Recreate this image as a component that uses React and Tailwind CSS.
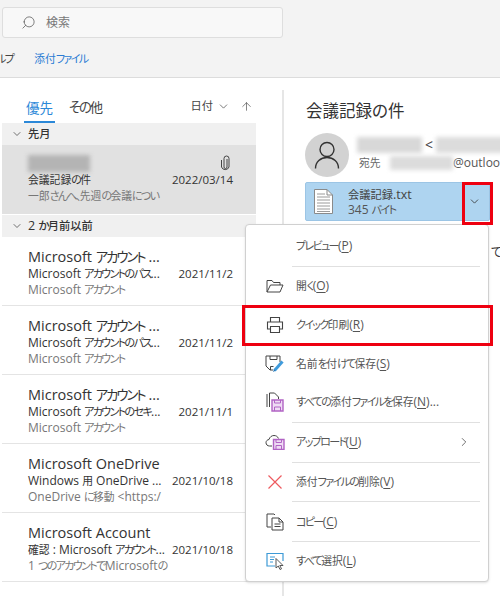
import React from 'react';
import { Search, ChevronDown, ChevronRight, ArrowUp } from 'lucide-react';

const font = "font-['Open_Sans','Noto_Sans_CJK_JP',sans-serif] [font-feature-settings:'palt']";

const mails = [
  { from: 'Microsoft アカウント ...', subject: 'Microsoft アカウントのパス...', date: '2021/11/2', preview: 'Microsoft アカウント' },
  { from: 'Microsoft アカウント ...', subject: 'Microsoft アカウントのパス...', date: '2021/11/2', preview: 'Microsoft アカウント' },
  { from: 'Microsoft アカウント ...', subject: 'Microsoft アカウントのセキ...', date: '2021/11/1', preview: 'Microsoft アカウント' },
  { from: 'Microsoft OneDrive', subject: 'Windows 用 OneDrive ...', date: '2021/10/18', preview: 'OneDrive に移動 <https:/' },
  { from: 'Microsoft Account', subject: '確認 : Microsoft アカウント...', date: '2021/10/18', preview: '1 つのアカウントでMicrosoftの' },
];

// kana sit tighter than kanji in the screenshot's UI font, latin stays full size
const Jp = ({ children }) => (
  <>
    {children.split(/([\u3040-\u30ff\u3001]+|[\u4e00-\u9fff]+)/).map((part, i) => {
      if (/[\u3040-\u30ff\u3001]/.test(part)) return <span key={i} className="text-[0.92em] tracking-[-0.15em]">{part}</span>;
      if (/[\u4e00-\u9fff]/.test(part)) return <span key={i} className="text-[0.9em]">{part}</span>;
      return part;
    })}
  </>
);

const ClipIcon = () => (
  <svg width="9" height="16" viewBox="0 0 9 16" fill="none" stroke="#444" strokeWidth="1">
    <path d="M6 4v8a1.500 1.500 0 0 1-3 0V3.500a2.500 2.500 0 0 1 5 0V12a4 4 0 0 1-7.500 0V5" />
  </svg>
);

const FolderIcon = () => (
  <svg width="18" height="14" viewBox="0 0 18 14" fill="none" stroke="#444" strokeWidth="1">
    <path d="M1 13V1.500h5l1.500 2H14V6M1 13h13l3-7H4.500L1 13Z" />
  </svg>
);

const PrintIcon = () => (
  <svg width="18" height="18" viewBox="0 0 18 18" fill="none" stroke="#444" strokeWidth="1.100">
    <path d="M4.500 6V1.500h9V6M4.500 13H1.500V6h15v7h-3" />
    <path d="M4.500 10.500h9v6h-9z" />
  </svg>
);

const SaveAsIcon = () => (
  <svg width="20" height="18" viewBox="0 0 20 18" fill="none">
    <path d="M1 1h14v6M1 1v10l4 4h3" stroke="#444" />
    <path d="M5 1v3.500h7V1M5.500 15v-3.500h3" stroke="#444" />
    <path d="M9.500 15.500l8-9" stroke="#3f9bdc" strokeWidth="3" />
    <path d="M8 17l1-2.500 1.500 1.300L8 17Z" fill="#1f6fb0" />
  </svg>
);

const SaveAllIcon = () => (
  <svg width="18" height="20" viewBox="0 0 18 20" fill="none">
    <path d="M1 15V2M3.500 15V1h5l4 4v2" stroke="#444" />
    <path d="M6 8h11v11H6z" fill="#efdcf4" stroke="#b163c4" strokeWidth="1.400" />
    <path d="M8.500 8v3h6V8M8.500 19v-4h6v4" stroke="#b163c4" />
  </svg>
);

const UploadIcon = () => (
  <svg width="20" height="16" viewBox="0 0 20 16" fill="none">
    <path d="M7 12H4.500C2.500 12 1 10.600 1 8.700 1 7 2.300 5.700 4 5.500 4.700 3 6.700 1.500 9 1.500c2 0 3.700 1 4.500 3" stroke="#444" />
    <path d="M8.500 5.500h10.500V15.500H8.500z" fill="#efdcf4" stroke="#b163c4" strokeWidth="1.400" />
    <path d="M11 5.500v3h5.500v-3M11 15.500v-4h5.500v4" stroke="#b163c4" />
  </svg>
);

const DeleteIcon = () => (
  <svg width="16" height="16" viewBox="0 0 16 16" fill="none" stroke="#ee5a5f" strokeWidth="1.200">
    <path d="M1.500 1.500l13 13M14.500 1.500l-13 13" />
  </svg>
);

const CopyIcon = () => (
  <svg width="18" height="18" viewBox="0 0 18 18" fill="none" stroke="#444" strokeWidth="1">
    <path d="M5 14H1V1h7l1 1" />
    <path d="M6 5h7l4 4v8H6zM13 5v4h4M8.500 11h6M8.500 13.500h6" />
  </svg>
);

const SelectAllIcon = () => (
  <svg width="18" height="18" viewBox="0 0 18 18" fill="none">
    <path d="M9 14H1V1.500h16V9" stroke="#3d9ad6" strokeWidth="1.200" />
    <path d="M4 5h5M4 7.500h4M4 10h3" stroke="#3d9ad6" />
    <path d="M10 6.500V16l2.300-2 1.700 3.500 1.500-.7-1.700-3.300H17L10 6.500Z" fill="#fff" stroke="#444" strokeWidth="0.900" />
  </svg>
);

const FileIcon = () => (
  <svg width="19" height="25" viewBox="0 0 19 25" fill="none">
    <path d="M.5.500h12.500l5.500 5.500v18.500H.5z" fill="#fff" stroke="#8a8a8a" />
    <path d="M13 .500v5.500h5.500" stroke="#8a8a8a" />
    <path d="M3 5h8M3 8h13M3 11h13M3 14h13M3 17h13M3 20h13M3 22.500h13" stroke="#9a9a9a" />
  </svg>
);

const UserIcon = () => (
  <svg width="26" height="28" viewBox="0 0 26 28" fill="none" stroke="#333" strokeWidth="1.400">
    <circle cx="13" cy="8.500" r="7" />
    <path d="M1.500 27.500c0-6.500 5-11 11.500-11s11.500 4.500 11.500 11" />
  </svg>
);

const MenuRow = ({ icon, label, k, after, arrow }) => (
  <div className="flex h-[38.750px] items-center text-[12px] text-[#555]">
    <div className="flex w-[50px] shrink-0 justify-center pl-[8px]">{icon}</div>
    <span><Jp>{label}</Jp>(<span className="underline underline-offset-2">{k}</span>){after}</span>
    {arrow && <ChevronRight className="ml-auto mr-[17px] text-[#444]" size={14} strokeWidth={1.300} />}
  </div>
);

const Sep = () => <div className="ml-[46px] mr-[8px] h-[1px] bg-[#e0e0e0]" />;

const AttachMenu = () => (
  <div className="absolute left-[245px] top-[224px] h-[358px] w-[244px] rounded-[4px] border border-[#d0d0d0] bg-white pt-[2px] shadow-sm">
    <MenuRow label="プレビュー" k="P" />
    <Sep />
    <MenuRow icon={<FolderIcon />} label="開く" k="O" />
    <MenuRow icon={<PrintIcon />} label="クイック印刷" k="R" />
    <MenuRow icon={<SaveAsIcon />} label="名前を付けて保存" k="S" />
    <MenuRow icon={<SaveAllIcon />} label="すべての添付ファイルを保存" k="N" after="..." />
    <Sep />
    <MenuRow icon={<UploadIcon />} label="アップロード" k="U" arrow />
    <Sep />
    <MenuRow icon={<DeleteIcon />} label="添付ファイルの削除" k="V" />
    <Sep />
    <MenuRow icon={<CopyIcon />} label="コピー" k="C" />
    <Sep />
    <MenuRow icon={<SelectAllIcon />} label="すべて選択" k="L" />
  </div>
);

const GroupHeader = ({ label }) => (
  <div className="flex h-[22px] items-center bg-[#f0f0f0] pl-[9px] text-[12.500px] font-medium text-[#333]">
    <ChevronDown size={12} strokeWidth={1.500} className="mr-[5px] text-[#444]" />
    <span><Jp>{label}</Jp></span>
  </div>
);

const MailRow = ({ mail }) => (
  <div className="h-[69px] border-b border-[#e4e4e4] pl-[26px] pr-[23px] pt-[11px]">
    <div className="h-[18px] truncate text-[14.500px] leading-[18px] text-[#333]"><Jp>{mail.from}</Jp></div>
    <div className="flex h-[16px] justify-between whitespace-nowrap text-[12px] leading-[16px] text-[#333]">
      <span><Jp>{mail.subject}</Jp></span>
      <span className="text-[11.500px]">{mail.date}</span>
    </div>
    <div className="whitespace-nowrap text-[12px] leading-[15px] text-[#777]"><Jp>{mail.preview}</Jp></div>
  </div>
);

const MailList = () => (
  <div className="flex w-[254px] shrink-0 flex-col">
    <div className="flex h-[45px] items-end pl-[22px]">
      <div className="h-[31px] border-b-2 border-[#2b88d8] px-[2px] pt-[5px] text-[15px] leading-[20px] text-[#2b88d8]"><Jp>優先</Jp></div>
      <div className="ml-[14px] h-[31px] pt-[5px] text-[14.500px] leading-[20px] text-[#444]"><Jp>その他</Jp></div>
      <div className="ml-auto flex h-[31px] items-center pb-[3px] text-[12.500px] text-[#444]">
        <Jp>日付</Jp>
        <ChevronDown size={13} strokeWidth={1.300} className="ml-[4px]" />
        <ArrowUp size={13} strokeWidth={1.200} className="ml-[10px] mr-[3px]" />
      </div>
    </div>
    <GroupHeader label="先月" />
    <div className="flex h-[69px] bg-[#e1e1e1] pl-[26px] pr-[23px] pt-[10px]">
      <div className="flex-1 whitespace-nowrap">
        <div className="h-[17px] w-[62px] bg-[#b4b4b4] blur-[2px]" />
        <div className="h-[16px] text-[12px] leading-[16px] text-[#333]"><Jp>会議記録の件</Jp></div>
        <div className="text-[12px] leading-[15px] text-[#777]"><Jp>一郎さんへ、先週の会議につい</Jp></div>
      </div>
      <div className="-ml-[60px] flex flex-col items-end">
        <div className="mr-[3px] h-[17px]"><ClipIcon /></div>
        <div className="text-[11.500px] leading-[16px] text-[#333]">2022/03/14</div>
      </div>
    </div>
    <div className="h-[1px]" />
    <GroupHeader label="2 か月前以前" />
    {mails.map((mail, i) => <MailRow key={i} mail={mail} />)}
  </div>
);

const Reader = () => (
  <div className="ml-[26px] mt-[12px] flex-1 overflow-hidden border-l-2 border-[#e6e6e6] pl-[21px]">
    <div className="ml-[1px] mt-[9px] h-[24px] text-[16.500px] leading-[24px] text-[#333]">会議記録の件</div>
    <div className="mt-[10px] flex h-[44px]">
      <div className="flex size-[44px] shrink-0 items-center justify-center rounded-full bg-[#d2d2d2]">
        <UserIcon />
      </div>
      <div className="ml-[8px] w-[200px] shrink-0">
        <div className="flex h-[20px] items-center gap-[3px] pt-[4px]">
          <div className="h-[16px] w-[65px] bg-[#d8d8d8] blur-[2px]" />
          <span className="text-[14px] leading-[16px] text-[#444]">&lt;</span>
          <div className="h-[16px] w-[70px] bg-[#dcdcdc] blur-[2px]" />
        </div>
        <div className="mt-[2px] flex h-[16px] items-center text-[12px] text-[#666]">
          <span className="ml-[2px] w-[31px]"><Jp>宛先</Jp></span>
          <div className="h-[14px] w-[63px] bg-[#dcdcdc] blur-[2px]" />
          <span className="text-[#555]">@outlook</span>
        </div>
      </div>
    </div>
    <div className="mt-[5px] flex h-[39px] w-[185px] items-center rounded-[2px] border border-[#9cc5e5] bg-[#aed4f0] pl-[8px]">
      <FileIcon />
      <div className="ml-[15px] flex-1 text-[#444]">
        <div className="text-[12.500px] leading-[15px]"><Jp>会議記録.txt</Jp></div>
        <div className="text-[12px] leading-[15px] text-[#555]"><Jp>345 バイト</Jp></div>
      </div>
      <ChevronDown size={13} strokeWidth={1.500} className="mr-[8px] text-[#333]" />
    </div>
    <div className="mt-[23px] pl-[186px] text-[12px] leading-[18px] text-[#333]">て</div>
  </div>
);

export default function App() {
  return (
    <div className={`relative flex h-[596px] w-[500px] flex-col overflow-hidden bg-white ${font}`}>
      <div className="h-[78px] shrink-0 border-b border-[#dcdcdc] bg-[#f3f3f3] pt-[7px]">
        <div className="ml-[2px] flex h-[31px] w-[281px] items-center rounded-[3px] border border-[#dedede] bg-[#f8f8f8] pl-[18px] text-[12px] text-[#777]">
          <Search size={15} strokeWidth={1.200} className="-scale-x-100 text-[#555]" />
          <span className="ml-[10px]">検索</span>
        </div>
        <div className="flex h-[42px] items-center overflow-hidden text-[12px]">
          <span className="-ml-[4px] text-[#444]"><Jp>ルプ</Jp></span>
          <span className="ml-[21px] text-[#2b7cd3]"><Jp>添付ファイル</Jp></span>
        </div>
      </div>
      <div className="flex min-h-0 flex-1 pl-[2px]">
        <MailList />
        <Reader />
      </div>
      <AttachMenu />
      <div className="absolute left-[462px] top-[182px] h-[43px] w-[31px] border-[3px] border-[#ee0010]" />
      <div className="absolute left-[242px] top-[305px] h-[41px] w-[251px] border-[3px] border-[#ee0010]" />
    </div>
  );
}
